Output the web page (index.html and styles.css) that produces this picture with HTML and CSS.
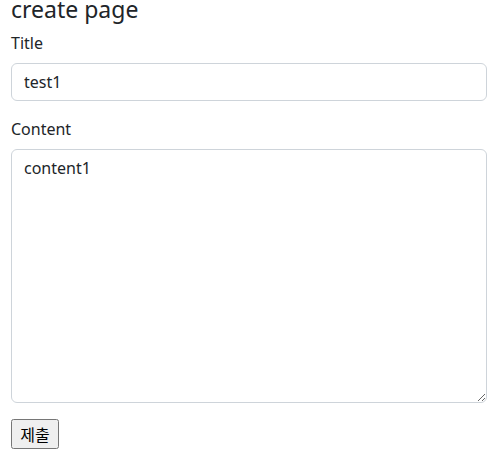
FILE: index.html
```html
<!DOCTYPE html>
<html lang="ko">
<head>
<meta charset="utf-8">
<title>create page</title>
<link rel="stylesheet" href="styles.css">
</head>
<body>
<div class="page">
  <h4 class="page-title">create page</h4>
  <form class="form">
    <div class="group">
      <label class="label" for="title">Title</label>
      <input class="control" id="title" type="text" value="test1">
    </div>
    <div class="group">
      <label class="label" for="content">Content</label>
      <textarea class="control area" id="content" rows="10">content1</textarea>
    </div>
    <button class="submit" type="submit">제출</button>
  </form>
</div>
</body>
</html>
```
FILE: styles.css
```css
* { box-sizing: border-box; }
html, body { margin: 0; padding: 0; }
body {
  font-family: "Noto Sans", "Noto Sans CJK KR", sans-serif;
  font-size: 16px;
  line-height: 1.5;
  color: #212529;
  background: #fff;
}
.page {
  padding: 0 9px 0 11px;
}
.page-title {
  font-size: 23px;
  font-weight: 400;
  line-height: 18px;
  margin: 0 0 13px;
  padding-top: 0;
}
.form { margin: 0; }
.group { margin-bottom: 16px; }
.label {
  display: inline-block;
  margin-bottom: 8px;
}
.control {
  display: block;
  width: 100%;
  padding: 6px 12px;
  font: inherit;
  color: #212529;
  background: #fff;
  border: 1px solid #ced4da;
  border-radius: 6px;
  outline: none;
  line-height: 24px;
  height: 38px;
}
.area {
  height: 254px;
  resize: vertical;
}
.submit {
  font-family: "Noto Sans CJK KR", "Noto Sans", sans-serif;
  font-size: 16px;
  line-height: 24px;
  padding: 1px 6px;
  width: 48px;
  height: 30px;
}
```
